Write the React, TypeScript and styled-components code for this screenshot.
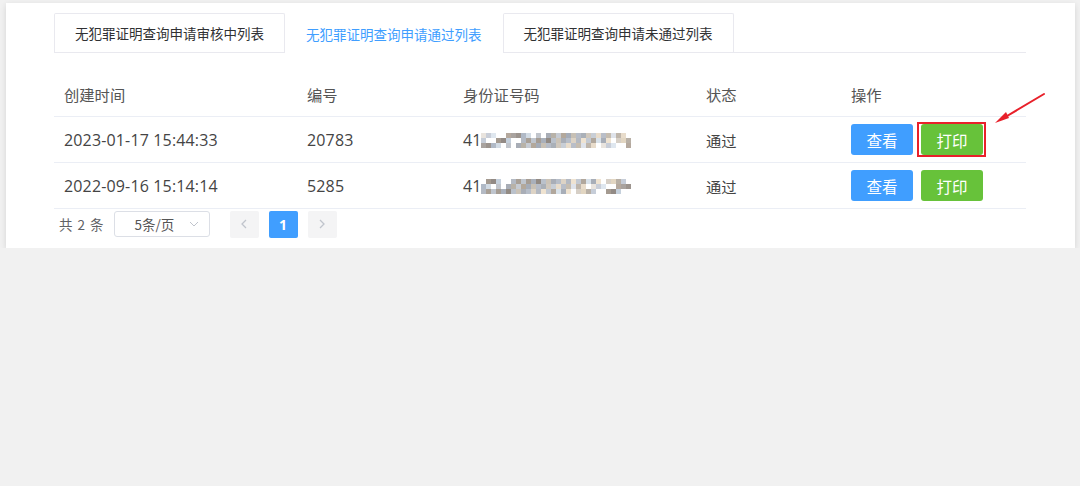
import React from 'react'
import styled, { createGlobalStyle } from 'styled-components'

const GlobalStyle = createGlobalStyle`
  html, body {
    margin: 0;
    padding: 0;
    background: #f1f1f1;
  }
  body {
    font-family: "Open Sans", "Noto Sans CJK SC", sans-serif;
    color: #606266;
  }
`

const Page = styled.div`
  padding: 3px 5px 0 6px;
`

const Card = styled.div`
  position: relative;
  background: #fff;
  box-shadow: 0 2px 6px rgba(0, 0, 0, 0.12);
  padding: 10px 49px 10px 48px;
`

const Tabs = styled.div`
  display: flex;
  border-bottom: 1px solid #e9e9ef;
`

const Tab = styled.div<{ $active?: boolean }>`
  padding: 0 20px;
  display: flex;
  align-items: center;
  font-family: "Noto Sans CJK SC", sans-serif;
  font-size: 13.5px;
  color: ${p => (p.$active ? '#409eff' : '#303133')};
  border: 1px solid ${p => (p.$active ? 'transparent' : '#e9e9ef')};
  border-bottom: none;
  border-radius: 2px 2px 0 0;
  margin-bottom: ${p => (p.$active ? '-1px' : '0')};
  background: #fff;
  height: ${p => (p.$active ? '39px' : '38px')};
`

const Table = styled.div`
  margin-top: 19px;
`

const Row = styled.div<{ $head?: boolean }>`
  display: grid;
  grid-template-columns: 243px 156px 243px 145px 1fr;
  height: ${p => (p.$head ? '44px' : '45px')};
  border-bottom: 1px solid #ebeef5;
  align-items: center;
  font-size: 15.3px;
  color: ${p => (p.$head ? '#555' : '#444')};
`

const Cell = styled.div`
  padding: 0 10px;
  display: flex;
  align-items: center;
  gap: 8px;
  white-space: nowrap;
`

const Num = styled.span`
  font-size: 16px;
  letter-spacing: 0.15px;
  display: inline-flex;
  align-items: center;
`

const Btn = styled.button<{ $color: string }>`
  width: 62px;
  height: 31px;
  border: none;
  border-radius: 3px;
  background: ${p => p.$color};
  color: #fff;
  font-family: "Noto Sans CJK SC", sans-serif;
  font-size: 15.5px;
  padding: 0;
  cursor: pointer;
`

const Marked = styled.span`
  position: relative;
  display: inline-flex;
  &::after {
    content: '';
    position: absolute;
    left: -4px;
    right: -3px;
    top: -2px;
    bottom: -2px;
    border: 2px solid #e8202a;
  }
`

const Mosaic = styled.span`
  display: inline-grid;
  grid-template-columns: repeat(30, 5px);
  grid-auto-rows: 5px;
  margin-left: -1px;
  margin-top: 2px;
`

const Tile = styled.span<{ $c: string }>`
  background: ${p => p.$c};
`

const Pager = styled.div`
  display: flex;
  align-items: center;
  margin-top: 1px;
  height: 28px;
  font-size: 13.5px;
  color: #606266;
  font-family: "Noto Sans CJK SC", sans-serif;
`

const Total = styled.span`
  margin-left: 5px;
  margin-right: 9px;
  letter-spacing: 1px;
`

const Select = styled.div`
  width: 96px;
  height: 26px;
  border: 1px solid #dcdfe6;
  border-radius: 3px;
  display: flex;
  align-items: center;
  justify-content: space-between;
  padding: 0 10px 0 20px;
  box-sizing: border-box;
  margin-right: 20px;
  color: #555;
`

const PageBtn = styled.div<{ $active?: boolean }>`
  width: 29px;
  height: 27px;
  margin-right: 10px;
  border-radius: 2px;
  display: flex;
  align-items: center;
  justify-content: center;
  background: ${p => (p.$active ? '#409eff' : '#f4f4f5')};
  color: ${p => (p.$active ? '#fff' : '#c0c4cc')};
  font-family: "Open Sans", sans-serif;
  font-weight: 700;
  font-size: 14px;
`

const Arrow = styled.svg`
  position: absolute;
  left: 978px;
  top: 84px;
`

const palettes = [
  ['#e9e4de', '#c9ced8', '#dfe7ef', '#fff', '#fff', '#b5a99e', '#a9a39f', '#9c948e', '#b0b9c6', '#d2dbe4', '#fff', '#c1c5cc', '#fff', '#a8adb6', '#b8b2a8', '#c6cbd3', '#b3a89b', '#a5acb8', '#c7c0b5', '#b6bcc7', '#aab0b8', '#d0c8bd', '#c8ced6', '#e8dccb', '#b9bec8', '#c6bdb0', '#dfe3ea', '#bfb6ab', '#e8dccb', '#fff'],
  ['#d6cfc6', '#e2d6c2', '#b8b0a6', '#c6cdd8', '#fff', '#fff', '#a49a90', '#928a85', '#c5d0dc', '#fff', '#fff', '#b4bac4', '#a9a096', '#bfc5ce', '#a69d94', '#a9b0bb', '#938b84', '#bac1cb', '#cbc3b7', '#a9aeb7', '#b7bec9', '#ddd3c5', '#b4b9c2', '#efe3d1', '#c3c9d2', '#b1a79c', '#d9e2ea', '#a8aeb8', '#efe3d1', '#fff'],
]

const IdMosaic = ({ seed }: { seed: number }) => {
  const tiles: string[] = []
  for (let r = 0; r < 3; r++) {
    const src = palettes[(seed + r) % 2]
    for (let c = 0; c < 30; c++) {
      tiles.push(src[(c + r * 3 + seed * 5) % 30])
    }
  }
  return (
    <Mosaic>
      {tiles.map((c, i) => (
        <Tile key={i} $c={c} />
      ))}
    </Mosaic>
  )
}

const rows = [
  { time: '2023-01-17 15:44:33', no: '20783', seed: 0, marked: true },
  { time: '2022-09-16 15:14:14', no: '5285', seed: 1, marked: false },
]

export default function App() {
  return (
    <Page>
      <GlobalStyle />
      <Card>
        <Tabs>
          <Tab>无犯罪证明查询申请审核中列表</Tab>
          <Tab $active>无犯罪证明查询申请通过列表</Tab>
          <Tab>无犯罪证明查询申请未通过列表</Tab>
        </Tabs>
        <Table>
          <Row $head>
            <Cell>创建时间</Cell>
            <Cell>编号</Cell>
            <Cell>身份证号码</Cell>
            <Cell>状态</Cell>
            <Cell>操作</Cell>
          </Row>
          {rows.map(r => (
            <Row key={r.no}>
              <Cell>
                <Num>{r.time}</Num>
              </Cell>
              <Cell>
                <Num>{r.no}</Num>
              </Cell>
              <Cell>
                <Num>
                  41
                  <IdMosaic seed={r.seed} />
                </Num>
              </Cell>
              <Cell>通过</Cell>
              <Cell>
                <Btn $color="#409eff">查看</Btn>
                {r.marked ? (
                  <Marked>
                    <Btn $color="#67c23a">打印</Btn>
                  </Marked>
                ) : (
                  <Btn $color="#67c23a">打印</Btn>
                )}
              </Cell>
            </Row>
          ))}
        </Table>
        <Pager>
          <Total>共 2 条</Total>
          <Select>
            <span>5条/页</span>
            <svg width="10" height="6" viewBox="0 0 10 6">
              <path d="M1 1l4 4 4-4" fill="none" stroke="#c0c4cc" strokeWidth="1" />
            </svg>
          </Select>
          <PageBtn>
            <svg width="6" height="10" viewBox="0 0 6 10">
              <path d="M5 1L1 5l4 4" fill="none" stroke="#c0c4cc" strokeWidth="1.3" />
            </svg>
          </PageBtn>
          <PageBtn $active>1</PageBtn>
          <PageBtn>
            <svg width="6" height="10" viewBox="0 0 6 10">
              <path d="M1 1l4 4-4 4" fill="none" stroke="#c0c4cc" strokeWidth="1.3" />
            </svg>
          </PageBtn>
        </Pager>
        <Arrow width="70" height="45" viewBox="0 0 70 45">
          <path d="M60 7L18 32" stroke="#e8202a" strokeWidth="2" strokeLinecap="round" />
          <path d="M11 36L22 25L25 31Z" fill="#e8202a" />
        </Arrow>
      </Card>
    </Page>
  )
}
